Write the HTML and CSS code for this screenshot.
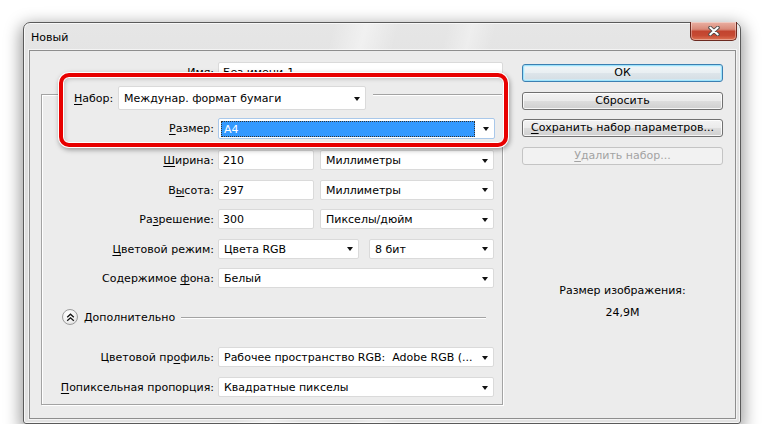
FILE: index.html
```html
<!DOCTYPE html>
<html lang="ru">
<head>
<meta charset="utf-8">
<title>Новый</title>
<link rel="stylesheet" href="styles.css">
</head>
<body>
<div class="window">
  <div class="titlebar">
    <span class="title">Новый</span>
    <div class="close">
      <svg width="12" height="10" viewBox="0 0 12 10">
        <path d="M2.2 1.6 L9.8 8.4 M9.8 1.6 L2.2 8.4" stroke="#4a4a4a" stroke-width="3.8" stroke-linecap="round" fill="none"/>
        <path d="M2.2 1.6 L9.8 8.4 M9.8 1.6 L2.2 8.4" stroke="#fff" stroke-width="2" stroke-linecap="round" fill="none"/>
      </svg>
    </div>
  </div>
  <div class="client">
    <div class="left">
      <div class="name-row">
        <span class="lbl"><u>И</u>мя:</span>
        <div class="field">Без имени-1</div>
      </div>
      <div class="group">
        <div class="highlight">
          <div class="preset-row">
            <span class="legend-lbl"><u>Н</u>абор:</span>
            <div class="select preset"><span class="sel-text">Междунар. формат бумаги</span><i class="arrow"></i></div>
            <span class="rule"></span>
          </div>
          <div class="size-row">
            <span class="lbl"><u>Р</u>азмер:</span>
            <div class="select focus"><span class="sel-focus">A4</span><i class="arrow"></i></div>
          </div>
        </div>
        <div class="form">
          <span class="lbl"><u>Ш</u>ирина:</span>
          <div class="ctrls"><div class="field num">210</div><div class="select unit"><span class="sel-text">Миллиметры</span><i class="arrow"></i></div></div>
          <span class="lbl">В<u>ы</u>сота:</span>
          <div class="ctrls"><div class="field num">297</div><div class="select unit"><span class="sel-text">Миллиметры</span><i class="arrow"></i></div></div>
          <span class="lbl">Ра<u>з</u>решение:</span>
          <div class="ctrls"><div class="field num">300</div><div class="select unit"><span class="sel-text">Пикселы/дюйм</span><i class="arrow"></i></div></div>
          <span class="lbl"><u>Ц</u>ветовой режим:</span>
          <div class="ctrls wide-gap"><div class="select mode"><span class="sel-text">Цвета RGB</span><i class="arrow"></i></div><div class="select bits"><span class="sel-text">8 бит</span><i class="arrow"></i></div></div>
          <span class="lbl">Содержимое <u>ф</u>она:</span>
          <div class="ctrls"><div class="select full"><span class="sel-text">Белый</span><i class="arrow"></i></div></div>
        </div>
        <div class="advanced">
          <span class="circle">
            <svg width="9" height="9" viewBox="0 0 9 9">
              <path d="M1.2 4.2 L4.5 1.2 L7.8 4.2 M1.2 7.8 L4.5 4.8 L7.8 7.8" stroke="#111" stroke-width="1.3" fill="none"/>
            </svg>
          </span>
          <span class="adv-text">Дополнительно</span>
          <span class="adv-rule"></span>
        </div>
        <div class="form form2">
          <span class="lbl">Цветовой пр<u>о</u>филь:</span>
          <div class="ctrls"><div class="select full"><span class="sel-text">Рабочее пространство RGB:&nbsp; Adobe RGB (...</span><i class="arrow"></i></div></div>
          <span class="lbl"><u>П</u>опиксельная пропорция:</span>
          <div class="ctrls"><div class="select full"><span class="sel-text">Квадратные пикселы</span><i class="arrow"></i></div></div>
        </div>
      </div>
    </div>
    <div class="right">
      <div class="btn default">ОК</div>
      <div class="btn">Сбросить</div>
      <div class="btn"><u>С</u>охранить набор параметров...</div>
      <div class="btn disabled"><u>У</u>далить набор...</div>
      <div class="info">Размер изображения:</div>
      <div class="info value">24,9M</div>
    </div>
  </div>
</div>
</body>
</html>
```

FILE: styles.css
```css
html, body {
  margin: 0;
  padding: 0;
  background: #ffffff;
}
body {
  font-family: "DejaVu Sans", "Liberation Sans", sans-serif;
  font-size: 11px;
  color: #000;
}
u {
  text-decoration: underline;
  text-underline-offset: 2px;
}

.window {
  margin: 22px 0 0 23px;
  width: 718px;
  height: 402px;
  box-sizing: border-box;
  border: 1px solid #5a5a5a;
  border-radius: 7px 7px 3px 3px;
  background:
    linear-gradient(104deg, rgba(255,255,255,0) 38%, rgba(255,255,255,0.45) 42%, rgba(255,255,255,0) 46%, rgba(255,255,255,0) 52%, rgba(255,255,255,0.35) 55%, rgba(255,255,255,0) 58%),
    linear-gradient(#e6e6e6, #dedede 30%, #e2e2e2);
  box-shadow: 0 5px 16px 3px rgba(0,0,0,0.38), inset 0 0 0 1px rgba(255,255,255,0.7);
  display: flex;
  flex-direction: column;
}

.titlebar {
  height: 27px;
  display: flex;
  justify-content: space-between;
  align-items: flex-start;
}
.title {
  padding: 1px 0 0 7px;
  line-height: 27px;
  color: #000;
}
.close {
  margin: -1px 3px 0 0;
  width: 47px;
  height: 19px;
  box-sizing: border-box;
  border: 1px solid #6c2a20;
  border-top: none;
  border-radius: 0 0 5px 5px;
  background: linear-gradient(#eab0a3 0%, #d98a79 40%, #c2442f 52%, #c64a33 75%, #dd7354 100%);
  box-shadow: inset 0 0 0 1px rgba(255,255,255,0.35);
  display: flex;
  align-items: center;
  justify-content: center;
}

.client {
  flex: 1;
  margin: 0 4px 4px 5px;
  border: 1px solid #8e8e8e;
  background: #ececec;
  box-shadow: 0 0 0 1px rgba(255,255,255,0.6);
  display: flex;
}

.left {
  width: 480px;
  flex: none;
}

.name-row {
  display: grid;
  grid-template-columns: 184px 285px;
  column-gap: 4px;
  margin-top: 11px;
}

.lbl {
  height: 20px;
  box-sizing: border-box;
  text-align: right;
  line-height: 20px;
  padding-top: 1px;
  white-space: nowrap;
}

.field {
  height: 20px;
  box-sizing: border-box;
  background: #fff;
  border: 1px solid #dadada;
  border-radius: 2px;
  padding: 1px 0 0 4px;
  line-height: 18px;
  white-space: nowrap;
  overflow: hidden;
}
.field.num {
  width: 96px;
}

.group {
  margin: 12px 0 0 11px;
  width: 462px;
  height: 311px;
  box-sizing: border-box;
  border: 1px solid #a3a3a3;
  box-shadow: inset 1px 1px 0 #fff, 1px 1px 0 #fff;
}

.highlight {
  position: relative;
  z-index: 1;
  margin: -22px 0 0 17px;
  width: 449px;
  height: 74px;
  box-sizing: border-box;
  border: 4px solid #e80000;
  border-radius: 10px;
  background: #ececec;
  box-shadow:
    0 0 0 1px #ffffff,
    1px 2px 5px 1px rgba(0,0,0,0.35),
    inset 0 0 0 1px #ffffff,
    inset 2px 2px 4px rgba(0,0,0,0.18);
  padding-top: 9px;
}

.preset-row {
  display: flex;
  align-items: flex-start;
  height: 24px;
  padding-left: 11px;
}
.legend-lbl {
  width: 44px;
  height: 24px;
  box-sizing: border-box;
  line-height: 24px;
  padding-top: 1px;
  white-space: nowrap;
}
.rule {
  flex: 1;
  margin: 8px 2px 0 7px;
  height: 0;
  border-top: 1px solid #a3a3a3;
  border-bottom: 1px solid #fff;
}

.size-row {
  display: grid;
  grid-template-columns: 151px 277px;
  column-gap: 4px;
  margin-top: 8px;
}
.size-row .lbl {
  height: 21px;
}

.select {
  height: 20px;
  box-sizing: border-box;
  background: #fff;
  border: 1px solid #dadada;
  border-radius: 2px;
  padding-left: 5px;
  display: flex;
  align-items: center;
  white-space: nowrap;
}
.sel-text {
  flex: 1;
  overflow: hidden;
  height: 18px;
  box-sizing: border-box;
  line-height: 18px;
  padding-top: 1px;
}
.arrow {
  flex: none;
  width: 0;
  height: 0;
  border-top: 4px solid #111;
  border-left: 3.5px solid transparent;
  border-right: 3.5px solid transparent;
  margin: 1px 5px 0 6px;
}
.select.preset {
  width: 248px;
  height: 24px;
}
.select.focus {
  width: 277px;
  height: 21px;
  border-color: #a9c8ea;
  padding: 0 0 0 2px;
}
.sel-focus {
  flex: 1;
  height: 16px;
  box-sizing: border-box;
  background: #3399ff;
  outline: 1px dotted #333;
  outline-offset: -1px;
  color: #fff;
  line-height: 15px;
  padding: 1px 0 0 3px;
  margin-right: 2px;
}
.select.focus .arrow {
  margin-left: 6px;
}
.select.unit { width: 174px; }
.select.mode { width: 141px; }
.select.bits { width: 125px; }
.select.full { width: 276px; }

.form {
  display: grid;
  grid-template-columns: 172px 276px;
  grid-auto-rows: 20px;
  column-gap: 4px;
  row-gap: 9.5px;
  margin-top: 3px;
}
.ctrls {
  display: flex;
  gap: 6px;
}
.ctrls.wide-gap {
  gap: 10px;
}

.advanced {
  display: flex;
  align-items: center;
  height: 16px;
  margin-top: 21px;
  padding-left: 20px;
}
.circle {
  width: 16px;
  height: 16px;
  box-sizing: border-box;
  border: 1px solid #9c9c9c;
  border-radius: 50%;
  background: radial-gradient(circle at 40% 35%, #ffffff 0%, #f2f2f2 50%, #d6d6d6 100%);
  display: flex;
  align-items: center;
  justify-content: center;
}
.adv-text {
  margin-left: 6px;
  height: 16px;
  box-sizing: border-box;
  line-height: 16px;
  padding-top: 1px;
}
.adv-rule {
  flex: 1;
  height: 0;
  margin: 1px 16px 0 6px;
  border-top: 1px solid #a3a3a3;
  border-bottom: 1px solid #fff;
}

.form2 {
  margin-top: 22px;
  row-gap: 10px;
}

.right {
  width: 201px;
  flex: none;
  margin-left: 12px;
  padding-top: 13px;
  display: flex;
  flex-direction: column;
  gap: 9.67px;
}
.btn {
  height: 18px;
  box-sizing: border-box;
  border: 1px solid #707070;
  border-radius: 3px;
  background: linear-gradient(#f3f3f3 0%, #ebebeb 48%, #dddddd 52%, #cfcfcf 100%);
  box-shadow: inset 0 0 0 1px rgba(255,255,255,0.8);
  text-align: center;
  line-height: 16px;
  white-space: nowrap;
}
.btn.default {
  border-color: #3c7fb1;
  box-shadow: inset 0 0 0 1px #9ee3fb, inset 0 0 0 2px rgba(200,240,255,0.6);
  background: linear-gradient(#f2f6f8 0%, #e9eff2 48%, #dde5ea 52%, #d4dde3 100%);
}
.btn.disabled {
  border-color: #c4c4c4;
  background: #f2f2f2;
  box-shadow: none;
  color: #a3a3a3;
}
.info {
  margin-top: 109.5px;
  text-align: center;
  line-height: 13px;
}
.info.value {
  margin-top: -0.67px;
}
```
